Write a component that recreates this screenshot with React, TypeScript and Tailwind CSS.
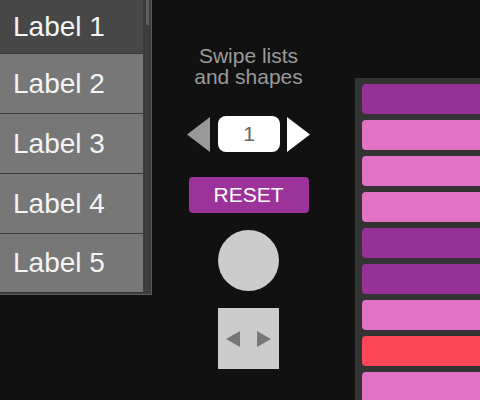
const rows = [
  { label: 'Label 1', h: 'h-[53px]', bg: 'bg-[#474747]' },
  { label: 'Label 2', h: 'h-[59px]', bg: 'bg-[#777777]' },
  { label: 'Label 3', h: 'h-[59px]', bg: 'bg-[#777777]' },
  { label: 'Label 4', h: 'h-[59px]', bg: 'bg-[#777777]' },
  { label: 'Label 5', h: 'h-[58px]', bg: 'bg-[#777777]' },
]

const bars = [
  'bg-[#963297]',
  'bg-[#e272c4]',
  'bg-[#e272c4]',
  'bg-[#e272c4]',
  'bg-[#963297]',
  'bg-[#963297]',
  'bg-[#e272c4]',
  'bg-[#fd4658]',
  'bg-[#e272c4]',
]

function ListPanel() {
  return (
    <div className="flex h-[295px] w-[152px] shrink-0 border-r border-b border-[#5a5a5a] bg-[#3c3c3c]">
      <div className="flex w-[143px] flex-col gap-px">
        {rows.map((r) => (
          <div key={r.label} className={`flex items-center pl-[13px] text-[28px] text-[#f4f4f4] ${r.h} ${r.bg}`}>
            {r.label}
          </div>
        ))}
      </div>
      <div className="flex w-[8px] justify-center">
        <div className="h-[25px] w-[3px] bg-[#5e5e5e]" />
      </div>
    </div>
  )
}

function Controls() {
  return (
    <div className="flex w-[193px] shrink-0 flex-col items-center pt-[45px]">
      <div className="text-center text-[21px] leading-[21px] text-[#9a9a9a]">
        Swipe lists
        <br />
        and shapes
      </div>

      <div className="mt-[29px] flex items-center">
        <svg width="23" height="35" viewBox="0 0 23 35">
          <polygon points="23,0 0,17.5 23,35" fill="#999999" />
        </svg>
        <div className="ml-[8px] flex h-[36px] w-[62px] items-center justify-center rounded-[8px] bg-white text-[21px] text-[#666666]">
          1
        </div>
        <svg width="23" height="35" viewBox="0 0 23 35" className="ml-[7px]">
          <polygon points="0,0 23,17.5 0,35" fill="#ffffff" />
        </svg>
      </div>

      <button className="mt-[25px] flex h-[36px] w-[120px] items-center justify-center rounded-[4px] bg-[#9b339a] text-[21px] text-white">
        RESET
      </button>

      <div className="mt-[17px] h-[61px] w-[61px] rounded-full bg-[#cccccc]" />

      <div className="mt-[17px] flex h-[61px] w-[61px] items-center justify-center gap-[17px] bg-[#cccccc]">
        <svg width="14" height="16" viewBox="0 0 14 16">
          <polygon points="14,0 0,8 14,16" fill="#777777" />
        </svg>
        <svg width="14" height="16" viewBox="0 0 14 16">
          <polygon points="0,0 14,8 0,16" fill="#777777" />
        </svg>
      </div>
    </div>
  )
}

function BarPanel() {
  return (
    <div className="ml-[10px] mt-[78px] h-[322px] flex-1 overflow-hidden bg-[#333333] pl-[7px] pt-[6px]">
      <div className="flex flex-col gap-[6px]">
        {bars.map((c, i) => (
          <div key={i} className={`h-[30px] w-[200px] rounded-[4px] ${c}`} />
        ))}
      </div>
    </div>
  )
}

export default function App() {
  return (
    <div className="flex h-[400px] w-[480px] overflow-hidden bg-[#111111] font-['Liberation_Sans',Arial,sans-serif]">
      <ListPanel />
      <Controls />
      <BarPanel />
    </div>
  )
}
